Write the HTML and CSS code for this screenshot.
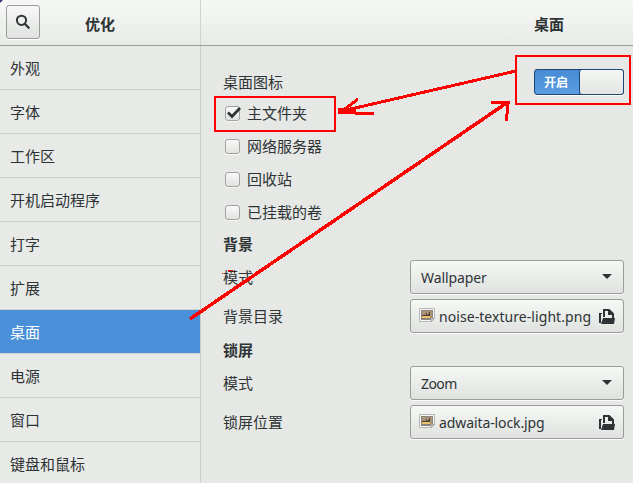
FILE: index.html
```html
<!DOCTYPE html>
<html lang="zh-CN">
<head>
<meta charset="utf-8">
<title>优化</title>
<link rel="stylesheet" href="styles.css">
</head>
<body>
<svg class="defs" width="0" height="0" aria-hidden="true">
  <symbol id="picture" viewBox="0 0 16 15">
    <path d="M.5.500h15v10l-3 3H.5z" fill="#f5f6f5" stroke="#b4b7b4"/>
    <path d="M2 2h12v8l-2 2H2z" fill="#8a8580"/>
    <path d="M3 3h10v7H3z" fill="#ab9474"/>
    <path d="M3 8h8v2H3z" fill="#edc46c"/>
    <path d="M3 7h4v1H3zM7 5h1v2h1v1H7zM10 4h1v4H9V6h1z" fill="#4a3e34"/>
    <path d="M12 13.500v-3h3.500z" fill="#d4d6d4" stroke="#a4a7a4"/>
  </symbol>
  <symbol id="open" viewBox="0 0 16 15">
    <path d="M0 4h3v1H2v9H0z" fill="#2e3436"/>
    <path d="M5 8V1h5l4 4v4" fill="none" stroke="#2e3436" stroke-width="2"/>
    <path d="M9 1h2l3 3v2H9z" fill="#2e3436"/>
    <path d="M4 9h12l-1 6H2z" fill="#2e3436"/>
  </symbol>
</svg>
<div class="window">
  <header class="header">
    <div class="header-side">
      <button class="search" aria-label="搜索"><svg width="16" height="16" viewBox="0 0 16 16"><circle cx="6.500" cy="6.300" r="4.600" fill="none" stroke="#2e3436" stroke-width="2"/><path d="M9.700 9.700l4 4" stroke="#2e3436" stroke-width="2.300" stroke-linecap="round"/></svg></button>
      <h1 class="title">优化</h1>
    </div>
    <h1 class="title title-main">桌面</h1>
  </header>
  <div class="body">
    <nav class="sidebar">
      <a class="item">外观</a>
      <a class="item">字体</a>
      <a class="item">工作区</a>
      <a class="item">开机启动程序</a>
      <a class="item">打字</a>
      <a class="item">扩展</a>
      <a class="item selected">桌面</a>
      <a class="item">电源</a>
      <a class="item">窗口</a>
      <a class="item">键盘和鼠标</a>
    </nav>
    <main class="content">
      <div class="row row-switch"><span>桌面图标</span><div class="switch"><span class="on">开启</span><span class="knob"></span></div></div>
      <label class="check"><span class="box"><svg class="tick" width="17" height="14" viewBox="0 0 17 14"><path d="M3 6.500L7 10.500L15 2" fill="none" stroke="#2e3436" stroke-width="2.700"/></svg></span><span class="check-text">主文件夹</span></label>
      <label class="check"><span class="box"></span><span class="check-text">网络服务器</span></label>
      <label class="check"><span class="box"></span><span class="check-text">回收站</span></label>
      <label class="check"><span class="box"></span><span class="check-text">已挂载的卷</span></label>
      <h2 class="heading first">背景</h2>
      <div class="row"><span>模式</span><div class="button combo"><span class="wallpaper">Wallpaper</span><svg width="10" height="5"><path d="M0 0h10L5 5z" fill="#2e3436"/></svg></div></div>
      <div class="row file-row"><span>背景目录</span><div class="button file"><svg class="thumb" width="16" height="15"><use href="#picture"/></svg><span class="name noise">noise-texture-light.png</span><svg width="16" height="15"><use href="#open"/></svg></div></div>
      <h2 class="heading">锁屏</h2>
      <div class="row"><span>模式</span><div class="button combo"><span class="zoom">Zoom</span><svg width="10" height="5"><path d="M0 0h10L5 5z" fill="#2e3436"/></svg></div></div>
      <div class="row file-row"><span>锁屏位置</span><div class="button file"><svg class="thumb" width="16" height="15"><use href="#picture"/></svg><span class="name lock">adwaita-lock.jpg</span><svg width="16" height="15"><use href="#open"/></svg></div></div>
    </main>
  </div>
  <svg class="marks" width="633" height="483" viewBox="0 0 633 483" fill="none" stroke="#f00" shape-rendering="crispEdges">
    <path d="M215 97h120v34H215zM516 56h114v48H516z" stroke-width="2"/>
    <path d="M516 71L342 111M358 99L341 112M355 113.500H374" stroke-width="3"/>
    <path d="M338 111h18" stroke-width="6"/>
    <path d="M190 319L508 102" stroke-width="3.500"/>
    <path d="M491 102.500H510M508 101L506.500 121" stroke-width="3"/>
    <path d="M228 270.500h5M222 273.500h1M228.500 270v2" stroke-width="1"/>
  </svg>
  <svg class="corner" width="4" height="4" viewBox="0 0 4 4"><path d="M0 0h3L0 3z" fill="#3f3277"/></svg>
</div>
</body>
</html>
```
FILE: styles.css
```css
* { box-sizing: border-box; }
body {
  margin: 0;
  color: #2e3436;
  font: 15px/20px "Noto Sans CJK SC", sans-serif;
}
.defs { position: absolute; }
.window {
  position: relative;
  width: 633px;
  height: 483px;
  overflow: hidden;
  background: #e8eae7;
}
.header {
  display: flex;
  height: 46px;
  background: linear-gradient(#f6f8f6, #e8ebe8);
  border-bottom: 1px solid #999c98;
}
.header-side {
  display: flex;
  width: 201px;
  padding: 5px 0 0 6px;
  border-right: 1px solid #d0d3cf;
}
.search {
  width: 34px;
  height: 34px;
  padding: 0;
  border: 1px solid #9a9d99;
  border-radius: 3px;
  background: linear-gradient(#f7f8f7, #dfe2df);
  box-shadow: 0 1px #fff;
}
.search svg { display: block; margin: 0 auto; }
.title { margin: 9px 0 0 45px; font-size: 15px; line-height: 20px; font-weight: 700; }
.title-main { margin: 14px 0 0 333px; }
.body { display: flex; height: 437px; }
.sidebar {
  flex: none;
  width: 201px;
  height: 437px;
  overflow: hidden;
  border-right: 1px solid #cbceca;
}
.item {
  display: block;
  height: 44px;
  padding: 12px 10px 0;
  border-bottom: 1px solid #cfd2ce;
}
.selected { background: #4a90d9; color: #fff; }
.content { flex: 1; padding: 20px 9px 0 22px; background: #e6e8e5; }
.row { display: flex; align-items: center; justify-content: space-between; height: 34px; }
.row-switch { height: 31px; }
.file-row { margin-top: 5px; }
.switch {
  display: flex;
  width: 90px;
  height: 26px;
  border: 1px solid #1c4774;
  border-radius: 3px;
  background: linear-gradient(#468bd4, #5a9de2);
  box-shadow: 0 1px #fff;
}
.on { flex: 1; padding-right: 3px; color: #fff; font-size: 12px; font-weight: 700; line-height: 24px; text-align: center; }
.knob {
  width: 45px;
  margin: -1px;
  border: 1px solid #1c4774;
  border-radius: 3px;
  background: linear-gradient(#f5f7f5, #e2e4e1);
}
.check { display: flex; align-items: center; height: 33px; }
.check-text { padding-bottom: 1px; }
.box {
  width: 15px;
  height: 15px;
  margin: 0 7px 0 2px;
  border: 1px solid #a0a39f;
  border-radius: 3px;
  background: linear-gradient(#f8f9f8, #e1e3e0);
  box-shadow: 0 1px #f7f8f6;
}
.tick { display: block; margin: -1px 0 0 -1px; }
.heading { height: 33px; margin: 0; padding-top: 7px; font-size: 15px; line-height: 20px; font-weight: 700; }
.first { height: 31px; padding-top: 5px; }
.button {
  display: flex;
  align-items: center;
  width: 214px;
  height: 34px;
  border: 1px solid #9a9d99;
  border-radius: 3px;
  background: linear-gradient(#f6f8f6, #dfe2df);
  box-shadow: 0 1px #fafbfa;
  font-family: "Noto Sans", "Open Sans", sans-serif;
  font-size: 14px;
  white-space: nowrap;
}
.button span { padding-top: 1px; }
.combo { justify-content: space-between; padding: 0 11px 0 10px; }
.combo svg { margin-top: -1px; }
.file { padding: 0 8px; }
.file svg { flex: none; }
.file .thumb { margin-top: -2px; }
.name { flex: 1; margin-left: 4px; }
.noise { letter-spacing: 0.06px; }
.lock { letter-spacing: -0.1px; }
.wallpaper { letter-spacing: -0.1px; }
.zoom { letter-spacing: -0.6px; }
.marks { position: absolute; top: 0; left: 0; pointer-events: none; }
.corner { position: absolute; top: 0; left: 0; }
```
